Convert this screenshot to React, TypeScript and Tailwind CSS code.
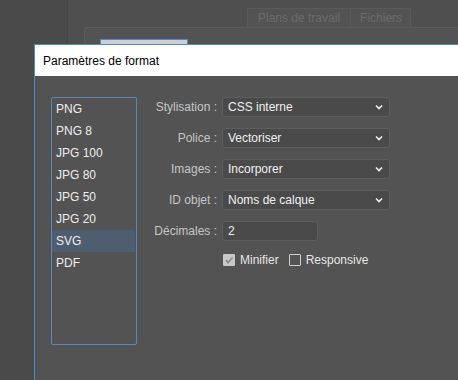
import React from "react";

const formats = ["PNG", "PNG 8", "JPG 100", "JPG 80", "JPG 50", "JPG 20", "SVG", "PDF"];

const fields = [
  { label: "Stylisation :", value: "CSS interne" },
  { label: "Police :", value: "Vectoriser" },
  { label: "Images :", value: "Incorporer" },
  { label: "ID objet :", value: "Noms de calque" },
];

function Chevron() {
  return (
    <svg width="8" height="6" viewBox="0 0 8 6" className="shrink-0">
      <polyline points="1,1.5 4,4.5 7,1.5" fill="none" stroke="#f2f2f2" strokeWidth="1.6" />
    </svg>
  );
}

function SelectBox({ value }: { value: string }) {
  return (
    <div className="flex h-[20px] w-[168px] items-center justify-between rounded-[3px] border border-[#5e5e5e] bg-[#4a4a4a] pl-[5px] pr-[6px]">
      <span className="text-[12px] text-[#f0f0f0]">{value}</span>
      <Chevron />
    </div>
  );
}

export default function App() {
  return (
    <div
      className="relative h-[380px] w-[458px] overflow-hidden bg-[#4f4f4f]"
      style={{ fontFamily: '"Liberation Sans", Arial, sans-serif' }}
    >
      {/* background window behind the dialog */}
      <div className="flex h-full">
        <div className="h-full w-[68px] border-r border-[#454545] bg-[#4a4a4a]" />
        <div className="flex-1">
          <div className="ml-[179px] mt-[8px] flex h-[19px] text-[12px] text-[#6c6c6c]">
            <div className="flex items-center border border-b-0 border-[#5a5a5a] bg-[#535353] pl-[10px] pr-[10px]">Plans de travail</div>
            <div className="flex items-center border border-b-0 border-l-0 border-[#5a5a5a] bg-[#535353] pl-[9px] pr-[8px]">Fichiers</div>
          </div>
          <div className="ml-[16px] h-[60px] rounded-tl-[3px] border-l border-t border-[#5c5c5c] bg-[#535353]">
            <div className="ml-[15px] mt-[11px] h-[20px] w-[88px] border border-[#4a8ad4] bg-[#cfcfcf]" />
          </div>
        </div>
      </div>

      {/* dialog */}
      <div className="absolute bottom-0 left-[34px] right-0 top-[44px] flex flex-col border-l border-t border-[#4b8bd6]">
        <div className="flex h-[31px] items-center bg-white pl-[8px] text-[12px] text-black">Paramètres de format</div>
        <div className="flex flex-1 bg-[#535353] pl-[16px] pt-[21px]">
          <div className="h-[248px] w-[86px] rounded-[2px] border border-[#5a87bd] pr-[1px]">
            {formats.map((f) => (
              <div
                key={f}
                className={`flex h-[22px] items-center pl-[4px] text-[12px] text-[#eeeeee] ${f === "SVG" ? "bg-[#4e5d70]" : ""}`}
              >
                {f}
              </div>
            ))}
          </div>

          <div className="ml-[9px] flex flex-col">
            {fields.map((fd) => (
              <div key={fd.label} className="mb-[11px] flex items-center">
                <div className="w-[76px] pr-[5px] text-right text-[12px] text-[#c6c6c6]">{fd.label}</div>
                <SelectBox value={fd.value} />
              </div>
            ))}
            <div className="flex items-center">
              <div className="w-[76px] pr-[5px] text-right text-[12px] text-[#c6c6c6]">Décimales :</div>
              <div className="flex h-[20px] w-[96px] items-center rounded-[3px] border border-[#5e5e5e] bg-[#4a4a4a] pl-[5px] text-[12px] text-[#f0f0f0]">
                2
              </div>
            </div>
            <div className="ml-[77px] mt-[10px] flex items-center text-[12px] text-[#e6e6e6]">
              <div className="flex h-[12px] w-[12px] items-center justify-center rounded-[1px] bg-[#c8c8c8]">
                <svg width="10" height="10" viewBox="0 0 10 10">
                  <polyline points="2,5 4,7.5 8.5,2.5" fill="none" stroke="#8c8c8c" strokeWidth="1.8" />
                </svg>
              </div>
              <span className="ml-[5px]">Minifier</span>
              <div className="ml-[10px] h-[12px] w-[12px] rounded-[1px] border border-[#d0d0d0]" />
              <span className="ml-[5px]">Responsive</span>
            </div>
          </div>
        </div>
      </div>
    </div>
  );
}
